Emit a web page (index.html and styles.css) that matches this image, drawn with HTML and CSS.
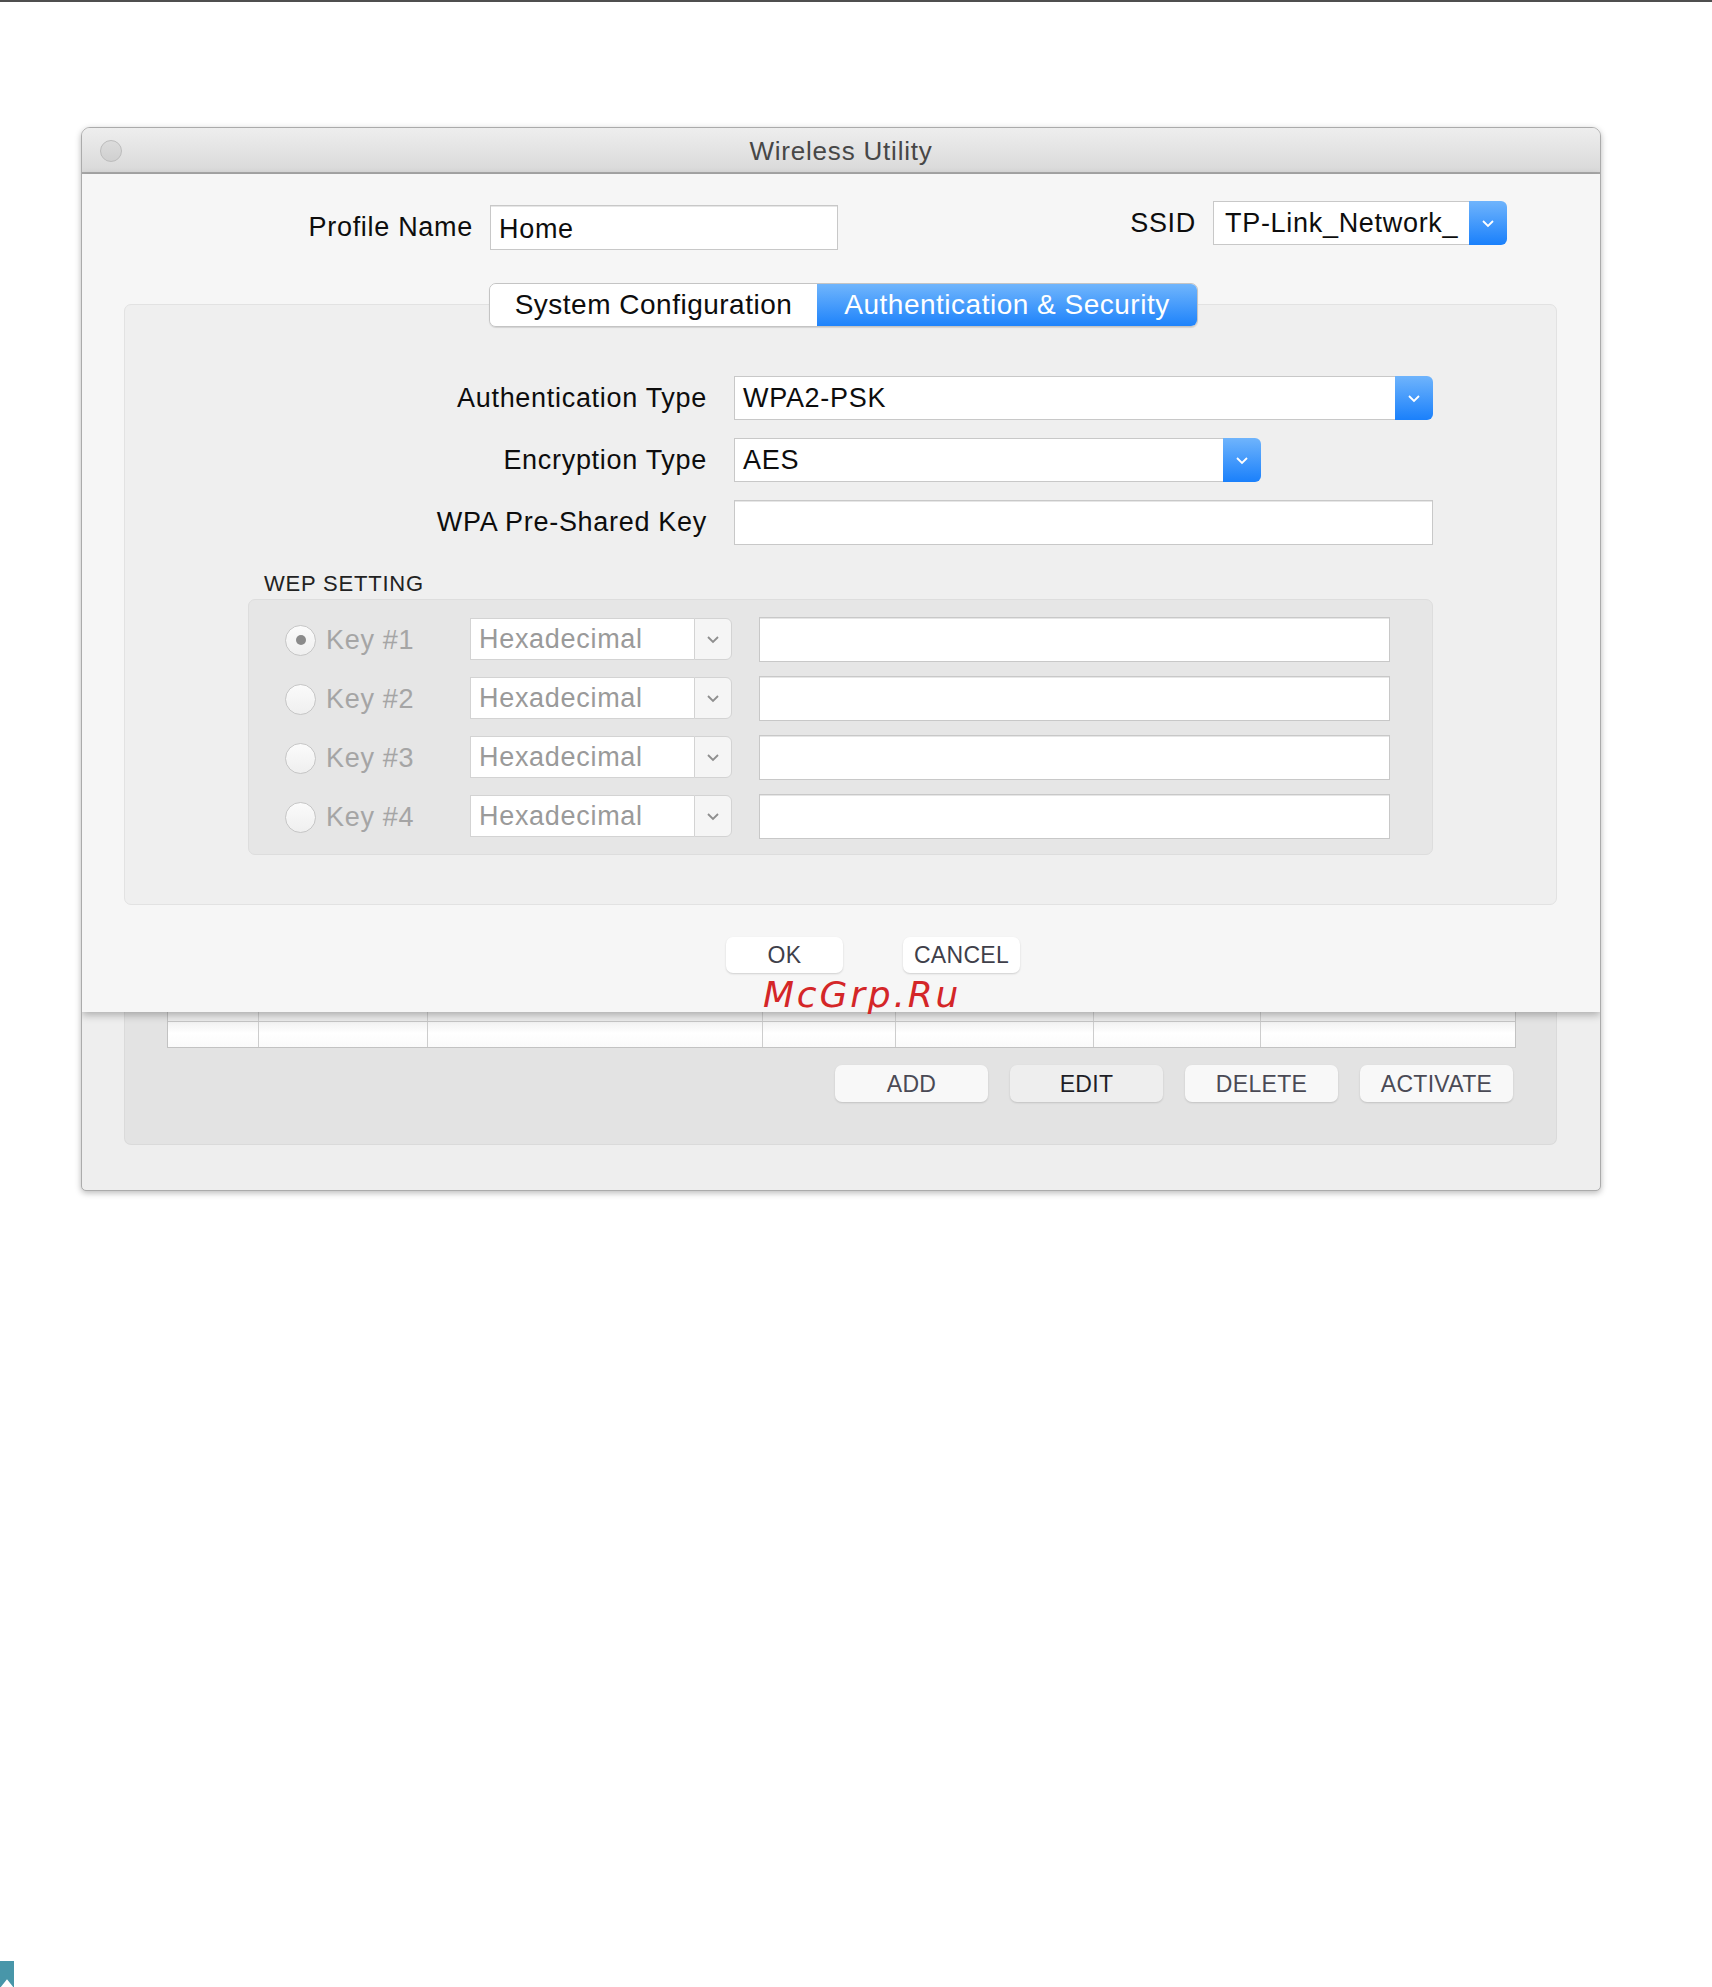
FILE: index.html
```html
<!DOCTYPE html>
<html>
<head>
<meta charset="utf-8">
<title>Wireless Utility</title>
<link rel="stylesheet" href="styles.css">
</head>
<body>
<div class="topline"></div>
<div class="window">
  <div class="titlebar">
    <span class="close-btn"></span>
    <span class="title">Wireless Utility</span>
    <span></span>
  </div>
  <div class="sheet">
    <div class="head-row">
      <div class="profile-group">
        <span class="lbl profile-lbl">Profile Name</span>
        <div class="textfield profile-field">Home</div>
      </div>
      <div class="ssid-group">
        <span class="lbl ssid-lbl">SSID</span>
        <div class="popup ssid-popup">
          <span class="popup-text">TP-Link_Network_</span>
          <span class="popup-btn"><svg class="chev" viewBox="0 0 14 9" width="14" height="9"><polyline points="2,2 7,7 12,2" fill="none" stroke="#fff" stroke-width="1.8"/></svg></span>
        </div>
      </div>
    </div>

    <div class="tabs">
      <div class="tab">System Configuration</div>
      <div class="tab tab-active">Authentication &amp; Security</div>
    </div>

    <div class="panel">
      <div class="form">
        <div class="frow">
          <span class="flabel">Authentication Type</span>
          <div class="popup auth-popup">
            <span class="popup-text">WPA2-PSK</span>
            <span class="popup-btn"><svg class="chev" viewBox="0 0 14 9" width="14" height="9"><polyline points="2,2 7,7 12,2" fill="none" stroke="#fff" stroke-width="1.8"/></svg></span>
          </div>
        </div>
        <div class="frow">
          <span class="flabel">Encryption Type</span>
          <div class="popup enc-popup">
            <span class="popup-text">AES</span>
            <span class="popup-btn"><svg class="chev" viewBox="0 0 14 9" width="14" height="9"><polyline points="2,2 7,7 12,2" fill="none" stroke="#fff" stroke-width="1.8"/></svg></span>
          </div>
        </div>
        <div class="frow">
          <span class="flabel">WPA Pre-Shared Key</span>
          <div class="textfield psk-field"></div>
        </div>
      </div>

      <div class="wep-title">WEP SETTING</div>
      <div class="wep-box">
        <div class="wep-row">
          <span class="radio on"></span>
          <span class="keylbl">Key #1</span>
          <div class="hexsel"><span class="hexsel-text">Hexadecimal</span><span class="hexsel-btn"><svg viewBox="0 0 14 9" width="14" height="9"><polyline points="2,2 7,7 12,2" fill="none" stroke="#8e8e8e" stroke-width="1.8"/></svg></span></div>
          <div class="textfield keyfield"></div>
        </div>
        <div class="wep-row">
          <span class="radio"></span>
          <span class="keylbl">Key #2</span>
          <div class="hexsel"><span class="hexsel-text">Hexadecimal</span><span class="hexsel-btn"><svg viewBox="0 0 14 9" width="14" height="9"><polyline points="2,2 7,7 12,2" fill="none" stroke="#8e8e8e" stroke-width="1.8"/></svg></span></div>
          <div class="textfield keyfield"></div>
        </div>
        <div class="wep-row">
          <span class="radio"></span>
          <span class="keylbl">Key #3</span>
          <div class="hexsel"><span class="hexsel-text">Hexadecimal</span><span class="hexsel-btn"><svg viewBox="0 0 14 9" width="14" height="9"><polyline points="2,2 7,7 12,2" fill="none" stroke="#8e8e8e" stroke-width="1.8"/></svg></span></div>
          <div class="textfield keyfield"></div>
        </div>
        <div class="wep-row">
          <span class="radio"></span>
          <span class="keylbl">Key #4</span>
          <div class="hexsel"><span class="hexsel-text">Hexadecimal</span><span class="hexsel-btn"><svg viewBox="0 0 14 9" width="14" height="9"><polyline points="2,2 7,7 12,2" fill="none" stroke="#8e8e8e" stroke-width="1.8"/></svg></span></div>
          <div class="textfield keyfield"></div>
        </div>
      </div>
    </div>

    <div class="sheet-buttons">
      <span class="btn">OK</span>
      <span class="btn">CANCEL</span>
    </div>
    <div class="watermark">McGrp.Ru</div>
  </div>

  <div class="lower">
    <div class="lower-panel">
      <div class="table">
        <div class="trow thead"><span></span><span></span><span></span><span></span><span></span><span></span><span></span></div>
        <div class="trow tdata"><span></span><span></span><span></span><span></span><span></span><span></span><span></span></div>
      </div>
      <div class="list-buttons">
        <span class="lbtn">ADD</span>
        <span class="lbtn edit">EDIT</span>
        <span class="lbtn">DELETE</span>
        <span class="lbtn">ACTIVATE</span>
      </div>
    </div>
  </div>
</div>
<div class="bookmark"></div>
</body>
</html>
```

FILE: styles.css
```css
* { box-sizing: border-box; }

html, body {
  margin: 0;
  padding: 0;
  background: #ffffff;
}

body {
  width: 1712px;
  font-family: "Liberation Sans", Arial, Helvetica, sans-serif;
  color: #111111;
}

.topline {
  height: 2px;
  background: #4f4f4f;
}

/* ---------- window ---------- */
.window {
  width: 1520px;
  margin: 125px 0 0 81px;
  border: 1px solid #ababab;
  border-radius: 9px 9px 5px 5px;
  background: #eeeeee;
  box-shadow: 0 2px 6px rgba(0, 0, 0, 0.28);
  overflow: hidden;
}

.titlebar {
  height: 46px;
  display: grid;
  grid-template-columns: 1fr auto 1fr;
  align-items: center;
  padding: 3px 18px 0;
  background: linear-gradient(#eeeeee, #d9d9d9);
  border-bottom: 2px solid #a9a9a9;
}

.close-btn {
  width: 22px;
  height: 22px;
  margin-top: -2px;
  border-radius: 50%;
  background: linear-gradient(#dcdcdc, #d0d0d0);
  border: 1px solid #bcbcbc;
}

.title {
  font-size: 26px;
  letter-spacing: 0.8px;
  color: #474747;
}

/* ---------- sheet ---------- */
.sheet {
  position: relative;
  z-index: 1;
  height: 838px;
  background: #f6f6f6;
  box-shadow: 0 3px 8px rgba(0, 0, 0, 0.28);
}

.head-row {
  display: flex;
  align-items: flex-start;
  padding: 27px 93px 0 0;
}

.profile-group {
  display: flex;
  align-items: center;
  margin-top: 4px;
}

.lbl {
  font-size: 27px;
  letter-spacing: 0.7px;
  color: #0d0d0d;
}

.profile-lbl {
  width: 391px;
  text-align: right;
  margin-right: 17px;
}

.textfield {
  height: 45px;
  background: #ffffff;
  border: 1px solid #c8c8c8;
  box-shadow: inset 0 1px 0 #e6e6e6;
  font-size: 27px;
  letter-spacing: 0.7px;
  color: #0d0d0d;
  padding: 3px 0 0 8px;
  display: flex;
  align-items: center;
}

.profile-field { width: 348px; }

.ssid-group {
  margin-left: auto;
  display: flex;
  align-items: center;
}

.ssid-lbl { margin-right: 17px; }

.popup {
  display: flex;
  height: 44px;
}

.popup-text {
  flex: 1;
  min-width: 0;
  background: #ffffff;
  border: 1px solid #c8c8c8;
  border-right: none;
  font-size: 27px;
  letter-spacing: 0.7px;
  color: #0d0d0d;
  padding: 1px 0 0 8px;
  white-space: nowrap;
  overflow: hidden;
  display: flex;
  align-items: center;
}

.ssid-popup { width: 294px; }
.ssid-popup .popup-text { padding-left: 11px; }

.popup-btn {
  width: 38px;
  background: linear-gradient(#6fb4fc, #1a80fb);
  border-radius: 0 6px 6px 0;
  display: flex;
  align-items: center;
  justify-content: center;
}

/* ---------- tabs ---------- */
.tabs {
  position: relative;
  z-index: 1;
  display: flex;
  width: 709px;
  height: 44px;
  margin: 33px 0 -23px 407px;
  border: 1px solid #c4c4c4;
  border-radius: 7px;
  overflow: hidden;
  box-shadow: 0 1px 1px rgba(0, 0, 0, 0.12);
}

.tab {
  width: 327px;
  background: #ffffff;
  font-size: 28px;
  letter-spacing: 0.5px;
  color: #0d0d0d;
  display: flex;
  align-items: center;
  justify-content: center;
}

.tab-active {
  width: auto;
  flex: 1;
  background: linear-gradient(#70b5fc, #1e83fb);
  color: #ffffff;
}

/* ---------- panel ---------- */
.panel {
  height: 601px;
  margin: 0 43px 0 42px;
  padding-top: 71px;
  background: #efefef;
  border: 1px solid #e2e2e2;
  border-radius: 7px;
}

.form {
  display: flex;
  flex-direction: column;
  gap: 18px;
}

.frow {
  display: flex;
  align-items: center;
  height: 44px;
}

.flabel {
  width: 582px;
  margin-right: 27px;
  text-align: right;
  font-size: 27px;
  letter-spacing: 0.7px;
  color: #0d0d0d;
}

.auth-popup { width: 699px; }
.enc-popup { width: 527px; }
.psk-field { width: 699px; }

.wep-title {
  margin: 27px 0 2px 139px;
  font-size: 22px;
  line-height: 26px;
  letter-spacing: 0.8px;
  color: #222222;
}

.wep-box {
  margin: 0 123px;
  padding: 17px 42px 16px 36px;
  background: #e6e6e6;
  border: 1px solid #dddddd;
  border-radius: 7px;
  display: flex;
  flex-direction: column;
  gap: 15px;
}

.wep-row {
  display: flex;
  align-items: center;
  height: 44px;
}

.radio {
  width: 31px;
  height: 31px;
  margin: 2px 10px 0 0;
  border-radius: 50%;
  border: 1px solid #c6c6c6;
  background: linear-gradient(#fbfbfb, #efefef);
  display: flex;
  align-items: center;
  justify-content: center;
}

.radio.on::after {
  content: "";
  width: 10px;
  height: 10px;
  border-radius: 50%;
  background: #8b8b8b;
}

.keylbl {
  width: 144px;
  padding-top: 3px;
  font-size: 27px;
  letter-spacing: 0.7px;
  color: #a5a5a5;
}

.hexsel {
  width: 262px;
  height: 42px;
  margin-right: 27px;
  display: flex;
}

.hexsel-text {
  flex: 1;
  background: #ffffff;
  border: 1px solid #d3d3d3;
  border-right: none;
  padding: 1px 0 0 8px;
  font-size: 27px;
  letter-spacing: 0.7px;
  color: #9a9a9a;
  display: flex;
  align-items: center;
}

.hexsel-btn {
  width: 38px;
  background: #f5f5f5;
  border: 1px solid #d3d3d3;
  border-radius: 0 6px 6px 0;
  display: flex;
  align-items: center;
  justify-content: center;
}

.keyfield { width: 631px; }

/* ---------- sheet buttons ---------- */
.sheet-buttons {
  display: flex;
  gap: 60px;
  margin-top: 32px;
  padding-left: 644px;
}

.btn {
  width: 117px;
  height: 36px;
  padding-top: 1px;
  background: #ffffff;
  border-radius: 7px;
  box-shadow: 0 1px 2px rgba(0, 0, 0, 0.16);
  font-size: 23px;
  letter-spacing: 0.3px;
  color: #3f3f4a;
  display: flex;
  align-items: center;
  justify-content: center;
}

.watermark {
  height: 39px;
  padding: 2px 0 0 681px;
  font-family: "DejaVu Sans", Verdana, sans-serif;
  font-style: italic;
  font-size: 36px;
  line-height: 39px;
  letter-spacing: 2.8px;
  color: #d42628;
}

/* ---------- lower (background window content) ---------- */
.lower {
  padding: 0 43px 45px 42px;
}

.lower-panel {
  padding: 0 40px 42px 42px;
  background: #e3e3e3;
  border: 1px solid #dadada;
  border-top: none;
  border-radius: 0 0 7px 7px;
}

.table {
  border: 1px solid #c2c2c2;
  border-top: none;
  background: #ffffff;
}

.trow {
  display: grid;
  grid-template-columns: 90px 169px 335px 133px 198px 167px 1fr;
}

.trow > span { border-left: 1px solid #cdcdcd; }
.trow > span:first-child { border-left: none; }

.thead {
  height: 10px;
  background: #ececec;
  border-bottom: 1px solid #c6c6c6;
}

.tdata {
  height: 25px;
  background: linear-gradient(#f2f2f2, #ffffff 45%, #fafafa);
}

.list-buttons {
  display: flex;
  justify-content: flex-end;
  gap: 22px;
  margin-top: 17px;
  padding-right: 3px;
}

.lbtn {
  width: 153px;
  height: 37px;
  padding-top: 1px;
  background: #f8f8f8;
  border-radius: 7px;
  box-shadow: 0 1px 2px rgba(0, 0, 0, 0.15);
  font-size: 23px;
  letter-spacing: 0.3px;
  color: #4a4a55;
  display: flex;
  align-items: center;
  justify-content: center;
}

.lbtn.edit {
  background: #eeeeee;
  color: #1e1e26;
}

/* ---------- page corner mark ---------- */
.bookmark {
  width: 14px;
  height: 27px;
  margin-top: 770px;
  background: #4896a9;
  clip-path: polygon(0 0, 100% 0, 100% 100%, 50% 68%, 0 100%);
}
```
